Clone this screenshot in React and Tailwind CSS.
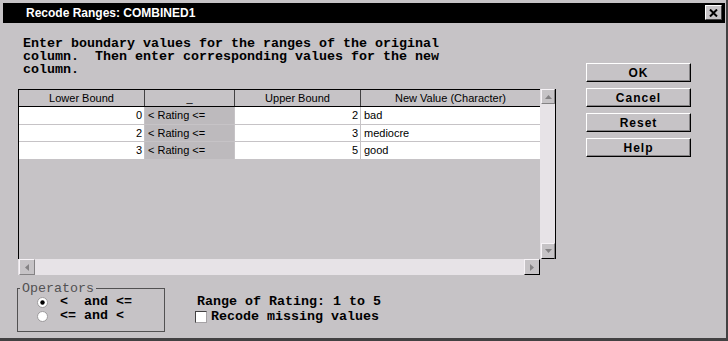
import React from "react";

const mono = "font-['Liberation_Mono',monospace]";
const sans = "font-['Liberation_Sans',Arial,sans-serif]";

const rows = [
  { lo: "0", hi: "2", val: "bad", h: "h-[18px]" },
  { lo: "2", hi: "3", val: "mediocre", h: "h-[17px]" },
  { lo: "3", hi: "5", val: "good", h: "h-[18px]" },
];

function Arrow({ dir }) {
  if (dir === "up" || dir === "down") {
    return (
      <svg width="7" height="4" viewBox="0 0 7 4">
        <polygon points={dir === "up" ? "0,4 3.5,0 7,4" : "0,0 7,0 3.5,4"} fill="#848284" />
      </svg>
    );
  }
  return (
    <svg width="4" height="7" viewBox="0 0 4 7">
      <polygon points={dir === "left" ? "4,0 4,7 0,3.5" : "0,0 0,7 4,3.5"} fill="#848284" />
    </svg>
  );
}

function ScrollButton({ dir, className = "" }) {
  return (
    <div
      className={`flex items-center justify-center bg-[#c6c3c6] border border-t-[#f7f3f7] border-l-[#f7f3f7] border-b-[#848284] border-r-[#848284] ${className}`}
    >
      <Arrow dir={dir} />
    </div>
  );
}

function DlgButton({ children }) {
  return (
    <div
      className={`flex h-[19px] w-[105px] items-center justify-center border border-t-white border-l-white border-b-black border-r-black bg-[#c6c3c6] text-[12px] font-bold tracking-[1px] text-black shadow-[inset_-1px_-1px_0_#848284] ${sans}`}
    >
      {children}
    </div>
  );
}

function Radio({ checked }) {
  return (
    <svg width="11" height="11" viewBox="0 0 11 11">
      <circle cx="5.5" cy="5.5" r="5" fill="#ffffff" stroke="#9c9a9c" />
      {checked && <circle cx="5.5" cy="5.5" r="2.2" fill="#000000" />}
    </svg>
  );
}

export default function App() {
  return (
    <div className="flex h-[341px] w-[728px] flex-col overflow-hidden border-b-[3px] border-r-2 border-[#424142] bg-[#c6c3c6] pt-[3px] text-black">
      {/* Title bar */}
      <div className="ml-[3px] mr-[1px] flex h-[20px] items-start justify-between bg-black">
        <span className={`pl-[23px] text-[12px] font-bold leading-[20px] text-white ${sans}`}>
          Recode Ranges: COMBINED1
        </span>
        <div className="mr-[3px] mt-[2px] flex h-[15px] w-[17px] items-center justify-center border border-t-white border-l-white border-b-[#424142] border-r-[#424142] bg-[#c6c3c6]">
          <svg width="9" height="8" viewBox="0 0 9 8">
            <path d="M1 0.5 L8 7.5 M8 0.5 L1 7.5" stroke="#000" strokeWidth="2" />
          </svg>
        </div>
      </div>

      <div className="flex">
        {/* Left column */}
        <div className="ml-[18px] w-[539px]">
          <p className={`ml-[5px] mt-[14px] whitespace-pre text-[13.33px] font-bold leading-[13px] ${mono}`}>
            {"Enter boundary values for the ranges of the original\ncolumn.  Then enter corresponding values for the new\ncolumn."}
          </p>

          {/* Table */}
          <div className={`mt-[13px] text-[11px] ${sans}`}>
            <div className="flex h-[170px]">
              <div className="w-[522px] border-l border-t border-black bg-[#c6c3c6]">
                <div className="flex h-[17px] border-b border-black leading-[16px]">
                  <div className="w-[126px] border-r border-[#424142] text-center">Lower Bound</div>
                  <div className="w-[90px] border-r border-[#424142] text-center">_</div>
                  <div className="w-[126px] border-r border-[#424142] text-center">Upper Bound</div>
                  <div className="flex-1 text-center">New Value (Character)</div>
                </div>
                {rows.map((r) => (
                  <div key={r.lo} className={`flex ${r.h} border-b border-[#c6c3c6] leading-[17px]`}>
                    <div className="w-[126px] border-r border-[#c6c3c6] bg-white pr-[2px] text-right">{r.lo}</div>
                    <div className="w-[90px] border-r border-[#c6c3c6] bg-[#bdbabd] pl-[3px]">&lt; Rating &lt;=</div>
                    <div className="w-[126px] border-r border-[#c6c3c6] bg-white pr-[2px] text-right">{r.hi}</div>
                    <div className="flex-1 bg-white pl-[3px]">{r.val}</div>
                  </div>
                ))}
              </div>
              <div className="flex w-[16px] flex-col border-r border-black bg-[#e7e3e7] pl-[1px]">
                <ScrollButton dir="up" className="h-[15px]" />
                <div className="flex-1" />
                <ScrollButton dir="down" className="h-[16px] border-b-black" />
              </div>
            </div>
            <div className="flex h-[16px] w-[522px] bg-[#e7e3e7] pl-[1px]">
              <ScrollButton dir="left" className="w-[16px]" />
              <div className="flex-1" />
              <ScrollButton dir="right" className="w-[16px] border-b-black border-r-black" />
            </div>
          </div>
        </div>

        {/* Buttons */}
        <div className="ml-[29px] mt-[40px] flex flex-col gap-[6px]">
          <DlgButton>OK</DlgButton>
          <DlgButton>Cancel</DlgButton>
          <DlgButton>Reset</DlgButton>
          <DlgButton>Help</DlgButton>
        </div>
      </div>

      {/* Bottom controls */}
      <div className={`ml-[17px] mt-[13px] flex items-start text-[13.33px] leading-[13px] ${mono}`}>
        <div className="relative h-[44px] w-[148px] border border-[#525152] pl-[19px] pt-[6px]">
          <span className="absolute -top-[7px] left-[2px] bg-[#c6c3c6] px-[2px] text-[#525152]">Operators</span>
          <div className="flex h-[14px] items-center gap-[12px] font-bold">
            <Radio checked />
            <span className="whitespace-pre leading-[14px]">{"<  and <="}</span>
          </div>
          <div className="flex h-[14px] items-center gap-[12px] font-bold">
            <Radio />
            <span className="whitespace-pre leading-[14px]">{"<= and <"}</span>
          </div>
        </div>
        <div className="ml-[30px] pt-[7px] font-bold">
          <div className="pl-[2px]">Range of Rating: 1 to 5</div>
          <div className="mt-[2px] flex h-[13px] items-center gap-[4px]">
            <div className="h-[12px] w-[12px] border border-t-[#424142] border-l-[#424142] border-b-[#a5a2a5] border-r-[#a5a2a5] bg-white" />
            <span>Recode missing values</span>
          </div>
        </div>
      </div>
    </div>
  );
}
